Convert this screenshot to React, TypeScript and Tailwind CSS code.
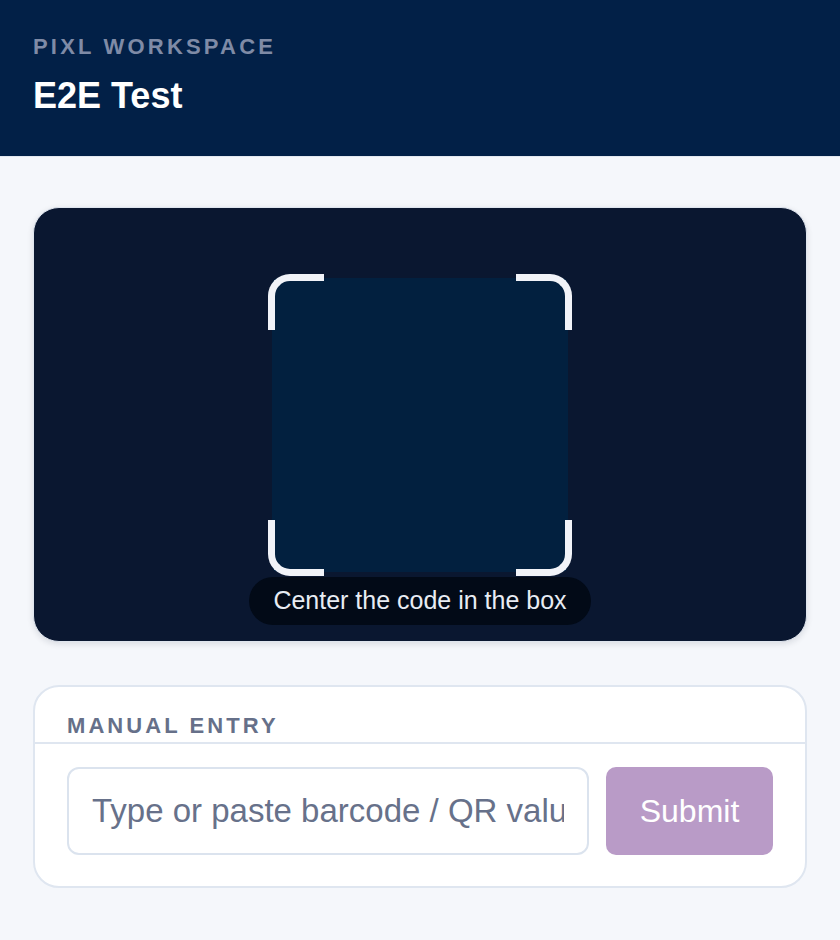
const Bracket = ({ pos }: { pos: "tl" | "tr" | "bl" | "br" }) => {
  const styles = {
    tl: "top-0 left-0 border-t-[7px] border-l-[7px] rounded-tl-[22px]",
    tr: "top-0 right-0 border-t-[7px] border-r-[7px] rounded-tr-[22px]",
    bl: "bottom-0 left-0 border-b-[7px] border-l-[7px] rounded-bl-[22px]",
    br: "bottom-0 right-0 border-b-[7px] border-r-[7px] rounded-br-[22px]",
  }[pos];
  return <span className={`absolute w-[56px] h-[56px] border-[#f1f3f8] ${styles}`} />;
};

const App = () => {
  return (
    <div className="min-h-[940px] bg-[#f5f7fb] font-['Liberation_Sans',Arial,sans-serif]">
      <header className="bg-[#022047] border-b border-[#e2e8f0] h-[157px] px-[33px] pt-[36px]">
        <div className="text-[22px] leading-[22px] font-bold tracking-[0.145em] text-[#7f8ba6]">
          PIXL WORKSPACE
        </div>
        <h1 className="mt-[20px] text-[36px] leading-[36px] font-bold text-white">E2E Test</h1>
      </header>

      <main className="px-[33px] pt-[50px] pb-[52px] flex flex-col gap-[43px]">
        <section className="h-[435px] rounded-[26px] border border-[#dfe5ee] bg-[#0a1730] shadow-[0_2px_6px_rgba(15,23,42,0.12)] flex flex-col items-center pt-[66px]">
          <div className="relative w-[304px] h-[302px]">
            <div className="absolute inset-[4px] bg-[#02203f] rounded-[6px]" />
            <Bracket pos="tl" />
            <Bracket pos="tr" />
            <Bracket pos="bl" />
            <Bracket pos="br" />
          </div>
          <div className="mt-[1px] h-[48px] px-[24px] rounded-full bg-[#020a17] flex items-center text-[25px] text-[#e8ecf3]">
            Center the code in the box
          </div>
        </section>

        <section className="rounded-[26px] border-2 border-[#dfe6f0] bg-white overflow-hidden">
          <div className="px-[32px] pt-[28px] pb-[5px] border-b-2 border-[#dfe6f0]">
            <h2 className="text-[22px] leading-[22px] font-bold tracking-[0.14em] text-[#667089]">
              MANUAL ENTRY
            </h2>
          </div>
          <div className="px-[32px] pt-[23px] pb-[31px] flex gap-[17px]">
            <input
              type="text"
              placeholder="Type or paste barcode / QR value"
              className="flex-1 min-w-0 h-[88px] rounded-[12px] border-2 border-[#dbe3ee] bg-white pl-[23px] pr-[23px] text-[33px] text-[#1f2937] placeholder:text-[#67718a] outline-none"
            />
            <button className="w-[167px] h-[88px] rounded-[10px] bg-[#b99bc7] text-white text-[32px]">
              Submit
            </button>
          </div>
        </section>
      </main>
    </div>
  );
};

export default App;
